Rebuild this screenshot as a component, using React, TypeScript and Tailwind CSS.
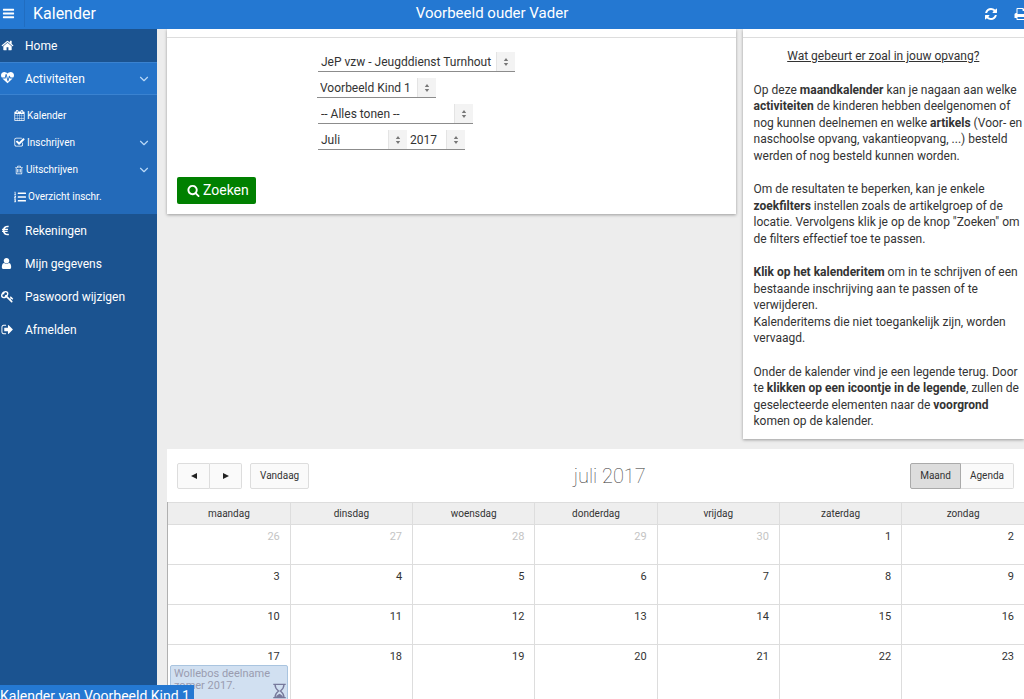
import type { ReactNode } from 'react';
import { FaEuroSign, FaListOl } from 'react-icons/fa';
import { ChevronDown } from 'lucide-react';

const ICONS = {
  bars: 'M1664 1344v128q0 26-19 45t-45 19h-1408q-26 0-45-19t-19-45v-128q0-26 19-45t45-19h1408q26 0 45 19t19 45zm0-512v128q0 26-19 45t-45 19h-1408q-26 0-45-19t-19-45v-128q0-26 19-45t45-19h1408q26 0 45 19t19 45zm0-512v128q0 26-19 45t-45 19h-1408q-26 0-45-19t-19-45v-128q0-26 19-45t45-19h1408q26 0 45 19t19 45z',
  home: 'M1472 992v480q0 26-19 45t-45 19h-384v-384h-256v384h-384q-26 0-45-19t-19-45v-480q0-1 .5-3t.5-3l575-474 575 474q1 2 1 6zm223-69l-62 74q-8 9-21 11h-3q-13 0-21-7l-692-577-692 577q-12 8-24 7-13-2-21-11l-62-74q-8-10-7-23.5t11-21.5l719-599q32-26 76-26t76 26l244 204v-195q0-14 9-23t23-9h192q14 0 23 9t9 23v408l219 182q10 8 11 21.5t-7 23.5z',
  heartbeat: 'M1280 896h305q-5 6-10 10.5t-9 7.5l-3 4-623 600q-18 18-44 18t-44-18l-624-602q-5-2-21-20h369q22 0 39.5-13.5t22.5-34.5l70-281 190 667q6 20 23 33t39 13q21 0 38-13t23-33l146-485 56 112q18 35 57 35zm512-428q0 145-103 300h-369l-111-221q-8-17-25.5-27t-36.5-8q-45 5-56 46l-129 430-196-686q-6-20-23.5-33t-39.5-13-39 13.5-22 34.5l-116 464h-423q-103-155-103-300 0-220 127-344t351-124q62 0 126.5 21.5t120 58 95.5 68.5 76 68q36-36 76-68t95.5-68.5 120-58 126.5-21.5q224 0 351 124t127 344z',
  calendar: 'M192 1664h288v-288h-288v288zm352 0h320v-288h-320v288zm-352-352h288v-320h-288v320zm352 0h320v-320h-320v320zm-352-384h288v-288h-288v288zm736 736h320v-288h-320v288zm-384-736h320v-288h-320v288zm768 736h288v-288h-288v288zm-384-352h320v-320h-320v320zm-352-864v-288q0-13-9.5-22.5t-22.5-9.5h-64q-13 0-22.5 9.5t-9.5 22.5v288q0 13 9.5 22.5t22.5 9.5h64q13 0 22.5-9.5t9.5-22.5zm736 864h288v-320h-288v320zm-384-384h320v-288h-320v288zm384 0h288v-288h-288v288zm32-480v-288q0-13-9.5-22.5t-22.5-9.5h-64q-13 0-22.5 9.5t-9.5 22.5v288q0 13 9.5 22.5t22.5 9.5h64q13 0 22.5-9.5t9.5-22.5zm384-64v1280q0 52-38 90t-90 38h-1408q-52 0-90-38t-38-90v-1280q0-52 38-90t90-38h128v-96q0-66 47-113t113-47h64q66 0 113 47t47 113v96h384v-96q0-66 47-113t113-47h64q66 0 113 47t47 113v96h128q52 0 90 38t38 90z',
  check: 'M1472 930v318q0 119-84.5 203.5t-203.5 84.5h-832q-119 0-203.5-84.5t-84.5-203.5v-832q0-119 84.5-203.5t203.5-84.5h832q63 0 117 25 15 7 18 23 3 17-9 29l-49 49q-10 10-23 10-3 0-9-2-23-6-45-6h-832q-66 0-113 47t-47 113v832q0 66 47 113t113 47h832q66 0 113-47t47-113v-254q0-13 9-22l64-64q10-10 23-10 6 0 12 3 20 8 20 29zm231-489l-814 814q-24 24-57 24t-57-24l-430-430q-24-24-24-57t24-57l110-110q24-24 57-24t57 24l263 263 647-647q24-24 57-24t57 24l110 110q24 24 24 57t-24 57z',
  trash: 'M704 736v576q0 14-9 23t-23 9h-64q-14 0-23-9t-9-23v-576q0-14 9-23t23-9h64q14 0 23 9t9 23zm256 0v576q0 14-9 23t-23 9h-64q-14 0-23-9t-9-23v-576q0-14 9-23t23-9h64q14 0 23 9t9 23zm256 0v576q0 14-9 23t-23 9h-64q-14 0-23-9t-9-23v-576q0-14 9-23t23-9h64q14 0 23 9t9 23zm128 724v-948h-896v948q0 22 7 40.5t14.5 27 10.5 8.5h832q3 0 10.5-8.5t14.5-27 7-40.5zm-672-1076h448l-48-117q-7-9-17-11h-317q-10 2-17 11zm928 32v64q0 14-9 23t-23 9h-96v948q0 83-47 143.5t-113 60.5h-832q-66 0-113-58.5t-47-141.5v-952h-96q-14 0-23-9t-9-23v-64q0-14 9-23t23-9h309l70-167q15-37 54-63t79-26h320q40 0 79 26t54 63l70 167h309q14 0 23 9t9 23z',
  user: 'M1536 1399q0 109-62.5 187t-150.5 78h-854q-88 0-150.5-78t-62.5-187q0-85 8.5-160.5t31.5-152 58.5-131 94-89 134.5-34.5q131 128 313 128t313-128q76 0 134.5 34.5t94 89 58.5 131 31.5 152 8.5 160.5zm-256-887q0 159-112.5 271.5t-271.5 112.5-271.5-112.5-112.5-271.5 112.5-271.5 271.5-112.5 271.5 112.5 112.5 271.5z',
  key: 'M832 512q0-80-56-136t-136-56-136 56-56 136q0 42 19 83-41-19-83-19-80 0-136 56t-56 136 56 136 136 56 136-56 56-136q0-42-19-83 41 19 83 19 80 0 136-56t56-136zm851 704q0 17-49 66t-66 49q-9 0-28.5-16t-36.5-33-38.5-40-24.5-26l-96 96 220 220q28 28 28 68 0 42-39 81t-81 39q-40 0-68-28l-671-671q-176 131-365 131-163 0-265.5-102.5t-102.5-265.5q0-160 95-313t248-248 313-95q163 0 265.5 102.5t102.5 265.5q0 189-131 365l355 355 96-96q-3-3-26-24.5t-40-38.5-33-36.5-16-28.5q0-17 49-66t66-49q13 0 23 10 6 6 46 44.5t82 79.5 86.5 86 73 78 28.5 41z',
  signOut: 'M704 1440q0 4 1 20t.5 26.5-3 23.5-10 19.5-20.5 6.5h-320q-119 0-203.5-84.5t-84.5-203.5v-704q0-119 84.5-203.5t203.5-84.5h320q13 0 22.5 9.5t9.5 22.5q0 4 1 20t.5 26.5-3 23.5-10 19.5-20.5 6.5h-320q-66 0-113 47t-47 113v704q0 66 47 113t113 47h312l11.5 1 11.5 3 8 5.5 7 9 2 13.5zm928-544q0 26-19 45l-544 544q-19 19-45 19t-45-19-19-45v-288h-448q-26 0-45-19t-19-45v-384q0-26 19-45t45-19h448v-288q0-26 19-45t45-19 45 19l544 544q19 19 19 45z',
  search: 'M1216 832q0-185-131.5-316.5t-316.5-131.5-316.5 131.5-131.5 316.5 131.5 316.5 316.5 131.5 316.5-131.5 131.5-316.5zm512 832q0 52-38 90t-90 38q-54 0-90-38l-343-342q-179 124-399 124-143 0-273.5-55.5t-225-150-150-225-55.5-273.5 55.5-273.5 150-225 225-150 273.5-55.5 273.5 55.5 225 150 150 225 55.5 273.5q0 220-124 399l343 343q37 37 37 90z',
  refresh: 'M1639 1056q0 5-1 7-64 268-268 434.5t-478 166.5q-146 0-282.5-55t-243.5-157l-129 129q-19 19-45 19t-45-19-19-45v-448q0-26 19-45t45-19h448q26 0 45 19t19 45-19 45l-137 137q71 66 161 102t187 36q134 0 250-65t186-179q11-17 53-117 8-23 30-23h192q13 0 22.5 9.5t9.5 22.5zm25-800v448q0 26-19 45t-45 19h-448q-26 0-45-19t-19-45 19-45l138-138q-148-137-349-137-134 0-250 65t-186 179q-11 17-53 117-8 23-30 23h-199q-13 0-22.5-9.5t-9.5-22.5v-7q65-268 270-434.5t480-166.5q146 0 284 55.5t245 156.5l130-129q19-19 45-19t45 19 19 45z',
  print: 'M448 1536h896v-256h-896v256zm0-640h896v-384h-160q-40 0-68-28t-28-68v-160h-640v640zm1152 64q0-26-19-45t-45-19-45 19-19 45 19 45 45 19 45-19 19-45zm128 0v416q0 13-9.5 22.5t-22.5 9.5h-224v160q0 40-28 68t-68 28h-960q-40 0-68-28t-28-68v-160h-224q-13 0-22.5-9.5t-9.5-22.5v-416q0-79 56.5-135.5t135.5-56.5h64v-544q0-40 28-68t68-28h672q40 0 88 20t76 48l152 152q28 28 48 76t20 88v256h64q79 0 135.5 56.5t56.5 135.5z',
};

function Icon({ name, className }: { name: keyof typeof ICONS; className: string }) {
  return (
    <svg viewBox="0 0 1792 1792" fill="currentColor" aria-hidden="true" className={`shrink-0 ${className}`}>
      <path d={ICONS[name]} />
    </svg>
  );
}

function MenuItem({ icon, label, className = '', open }: { icon: ReactNode; label: string; className?: string; open?: boolean }) {
  return (
    <a href="#" className={`flex h-[33px] items-center pr-[6px] pl-px text-[12px] ${className}`}>
      <span className="flex w-6 shrink-0 items-center">{icon}</span>
      {label}
      {open && <ChevronDown size={14} strokeWidth={2} className="ml-auto text-[#b9d8f7]" />}
    </a>
  );
}

function SubMenuItem({ icon, label, expandable }: { icon: ReactNode; label: string; expandable?: boolean }) {
  return (
    <a href="#" className="flex h-[27px] items-center gap-[2px] pr-[6px] pl-[14px] text-[10px]">
      {icon}
      {label}
      {expandable && <ChevronDown size={14} strokeWidth={2} className="ml-auto text-[#b9d8f7]" />}
    </a>
  );
}

interface FilterSelectProps {
  label: string;
  options: string[];
  className: string;
}

function FilterSelect({ label, options, className }: FilterSelectProps) {
  return (
    <div className={`relative h-5 border-b border-[#8c8c8c] ${className}`}>
      <select aria-label={label} className="block h-full w-full appearance-none bg-transparent pr-5 pl-[3px] text-[12px] text-[#333] outline-none">
        {options.map((option) => (
          <option key={option}>{option}</option>
        ))}
      </select>
      <span className="pointer-events-none absolute top-0 right-0 flex h-full w-[19px] items-center justify-center border-l border-[#e4e4e4] bg-[#f3f3f3]">
        <svg viewBox="0 0 6 8" className="h-2 w-[6px]" fill="#777">
          <path d="M3 0 5.2 3H.8zM3 8 .8 5h4.4z" />
        </svg>
      </span>
    </div>
  );
}

const DAYS = ['maandag', 'dinsdag', 'woensdag', 'donderdag', 'vrijdag', 'zaterdag', 'zondag'];

const WEEKS = [
  [26, 27, 28, 29, 30, 1, 2],
  [3, 4, 5, 6, 7, 8, 9],
  [10, 11, 12, 13, 14, 15, 16],
  [17, 18, 19, 20, 21, 22, 23],
];

function CalendarEvent() {
  return (
    <a
      href="#"
      className="relative mx-[2px] block h-[36px] rounded-[2px] border border-[#a9c4df] bg-[#d1e0f1] px-[3px] pt-[2px] text-[11px] leading-[12px] text-[#9a9cb0]"
    >
      Wollebos deelname zomer 2017.
      <svg viewBox="0 0 16 18" className="absolute right-0 bottom-px h-4 w-[15px]" fill="none" stroke="#77799b" strokeWidth="1.5">
        <path d="M1 1.5h14M1 16.5h14M3 2c0 4 1.5 5 4 7-2.5 2-4 3-4 7M13 2c0 4-1.5 5-4 7 2.5 2 4 3 4 7" />
        <path d="M4 16c.5-2 2-3 4-4 2 1 3.5 2 4 4z" fill="#77799b" stroke="none" />
      </svg>
    </a>
  );
}

function CalendarTable() {
  return (
    <div className="border-l border-[#b0b0b0]">
      <table className="w-full table-fixed border-collapse">
        <thead>
          <tr className="h-[21px] bg-[#eee]">
            {DAYS.map((day) => (
              <th key={day} className="border border-[#ddd] p-0 pt-px text-[10px] leading-5 font-normal first:border-l-0 last:border-r-0">
                {day}
              </th>
            ))}
          </tr>
        </thead>
        <tbody>
          {WEEKS.map((week, row) => (
            <tr key={week[0]} className="h-10 last:h-20">
              {week.map((day) => (
                <td key={day} className="border border-[#ddd] p-0 align-top first:border-l-0 last:border-r-0">
                  <p className={`h-5 pt-1 pr-[10px] text-right text-[11px] leading-4 ${row === 0 && day > 7 ? 'text-[#c4c4c4]' : 'text-[#333]'}`}>{day}</p>
                  {day === 17 && <CalendarEvent />}
                </td>
              ))}
            </tr>
          ))}
        </tbody>
      </table>
    </div>
  );
}

function HelpPanel() {
  return (
    <section className="bg-white shadow-[0_1px_3px_rgba(0,0,0,0.35)]">
      <div className="h-[9px] border-b border-[#ddd]" />
      <div className="space-y-[17px] pt-[10px] pb-[9px] pl-[11px] text-[12px] leading-snug whitespace-nowrap">
        <h2 className="pr-[11px] text-center underline">Wat gebeurt er zoal in jouw opvang?</h2>
        <p>
          Op deze <b>maandkalender</b> kan je nagaan aan welke
          <br />
          <b>activiteiten</b> de kinderen hebben deelgenomen of
          <br />
          nog kunnen deelnemen en welke <b>artikels</b> (Voor- en
          <br />
          naschoolse opvang, vakantieopvang, ...) besteld
          <br />
          werden of nog besteld kunnen worden.
        </p>
        <p>
          Om de resultaten te beperken, kan je enkele
          <br />
          <b>zoekfilters</b> instellen zoals de artikelgroep of de
          <br />
          locatie. Vervolgens klik je op de knop "Zoeken" om
          <br />
          de filters effectief toe te passen.
        </p>
        <p>
          <b>Klik op het kalenderitem</b> om in te schrijven of een
          <br />
          bestaande inschrijving aan te passen of te
          <br />
          verwijderen.
          <br />
          Kalenderitems die niet toegankelijk zijn, worden
          <br />
          vervaagd.
        </p>
        <p>
          Onder de kalender vind je een legende terug. Door
          <br />
          te <b>klikken op een icoontje in de legende</b>, zullen de
          <br />
          geselecteerde elementen naar de <b>voorgrond</b>
          <br />
          komen op de kalender.
        </p>
      </div>
    </section>
  );
}

export default function App() {
  return (
    <div className="relative flex h-screen flex-col overflow-hidden bg-[#ededed] font-[Roboto,sans-serif] text-[12px] text-[#333]">
      {/* Top bar */}
      <header className="flex h-[29px] shrink-0 items-center bg-[#2478d2] pb-[2px] text-[16px] text-white">
        <div className="flex flex-1 items-center">
          <button type="button" aria-label="Menu" className="flex h-[27px] w-[25px] items-center border-r border-[#216dc0] pl-[2px]">
            <Icon name="bars" className="size-[13px]" />
          </button>
          <h1 className="pl-2">Kalender</h1>
        </div>
        <p className="text-[15px]">Voorbeeld ouder Vader</p>
        <div className="flex grow basis-10 justify-end gap-4 overflow-hidden">
          <button type="button" aria-label="Vernieuwen">
            <Icon name="refresh" className="size-[14px]" />
          </button>
          <button type="button" aria-label="Afdrukken" className="-mr-1">
            <Icon name="print" className="size-[14px]" />
          </button>
        </div>
      </header>

      <div className="flex min-h-0 flex-1">
        {/* Side menu */}
        <nav className="w-[157px] shrink-0 bg-[#1b5390] text-white">
          <MenuItem icon={<Icon name="home" className="size-[13px]" />} label="Home" />
          <MenuItem icon={<Icon name="heartbeat" className="size-[13px]" />} label="Activiteiten" className="border-y border-[#3a82d0] bg-[#2573c8]" open />
          <div className="bg-[#236ab9] pt-[7px] pb-1">
            <SubMenuItem icon={<Icon name="calendar" className="size-[11px]" />} label="Kalender" />
            <SubMenuItem icon={<Icon name="check" className="size-[11px]" />} label="Inschrijven" expandable />
            <SubMenuItem icon={<Icon name="trash" className="size-[10px]" />} label="Uitschrijven" expandable />
            <SubMenuItem icon={<FaListOl size={12} />} label="Overzicht inschr." />
          </div>
          <MenuItem icon={<FaEuroSign size={11} className="-ml-px" />} label="Rekeningen" />
          <MenuItem icon={<Icon name="user" className="-ml-px size-[13px]" />} label="Mijn gegevens" />
          <MenuItem icon={<Icon name="key" className="size-[13px]" />} label="Paswoord wijzigen" />
          <MenuItem icon={<Icon name="signOut" className="size-[13px]" />} label="Afmelden" />
        </nav>

        <main className="min-w-0 flex-1 overflow-hidden pl-[10px]">
          <div className="grid grid-cols-[2.02fr_1fr] items-start gap-[7px]">
            <form className="bg-white shadow-[0_1px_3px_rgba(0,0,0,0.35)]" onSubmit={(e) => e.preventDefault()}>
              <div className="h-[9px] border-b border-[#ddd]" />
              <div className="flex flex-col gap-[6px] pt-[14px] pl-[151px]">
                <FilterSelect label="Locatie" options={['JeP vzw - Jeugddienst Turnhout']} className="w-[197px]" />
                <FilterSelect label="Kind" options={['Voorbeeld Kind 1']} className="-ml-px w-[119px]" />
                <FilterSelect label="Artikelgroep" options={['-- Alles tonen --']} className="w-[155px]" />
                <div className="flex">
                  <FilterSelect label="Maand" options={['Juli']} className="w-[89px]" />
                  <FilterSelect label="Jaar" options={['2017']} className="w-[58px]" />
                </div>
              </div>
              <button type="submit" className="mt-[27px] mb-[10px] ml-[10px] flex h-[27px] items-center gap-[3px] rounded-[2px] bg-[#008000] pr-[7px] pl-[10px] text-[14px] text-white">
                <Icon name="search" className="size-[13px]" />
                Zoeken
              </button>
            </form>

            <HelpPanel />
          </div>

          {/* Month calendar */}
          <section className="mt-[10px] bg-white">
            <div className="flex items-center justify-between px-[10px] pt-[14px] pb-[13px]">
              <div className="flex gap-2 text-[10px]">
                <div className="flex">
                  <button type="button" aria-label="Vorige maand" className="flex h-[26px] w-[33px] items-center justify-center rounded-l-[2px] border border-[#ddd] bg-[#fafafa]">
                    <svg viewBox="0 0 6 6" className="size-[6px]" fill="#222">
                      <path d="M6 0v6L0 3z" />
                    </svg>
                  </button>
                  <button type="button" aria-label="Volgende maand" className="flex h-[26px] w-8 items-center justify-center rounded-r-[2px] border border-l-0 border-[#ddd] bg-[#fafafa]">
                    <svg viewBox="0 0 6 6" className="size-[6px]" fill="#222">
                      <path d="M0 0v6l6-3z" />
                    </svg>
                  </button>
                </div>
                <button type="button" className="h-[26px] rounded-[2px] border border-[#ddd] bg-[#fafafa] px-[9px]">
                  Vandaag
                </button>
              </div>
              <h2 className="text-[20px] leading-6 font-thin">juli 2017</h2>
              <div className="flex text-[10px]">
                <button type="button" className="h-[26px] rounded-l-[2px] border border-[#aaa] bg-[#ddd] px-[9px]">
                  Maand
                </button>
                <button type="button" className="h-[26px] rounded-r-[2px] border border-l-0 border-[#ddd] bg-[#fafafa] px-[9px]">
                  Agenda
                </button>
              </div>
            </div>
            <CalendarTable />
          </section>
        </main>
      </div>

      {/* Status label over the bottom-left corner */}
      <div className="absolute bottom-0 left-0 h-[14px] bg-[#2478d2] pr-1 text-[14px] leading-[22px] text-white">
        Kalender van Voorbeeld Kind 1
      </div>
    </div>
  );
}
